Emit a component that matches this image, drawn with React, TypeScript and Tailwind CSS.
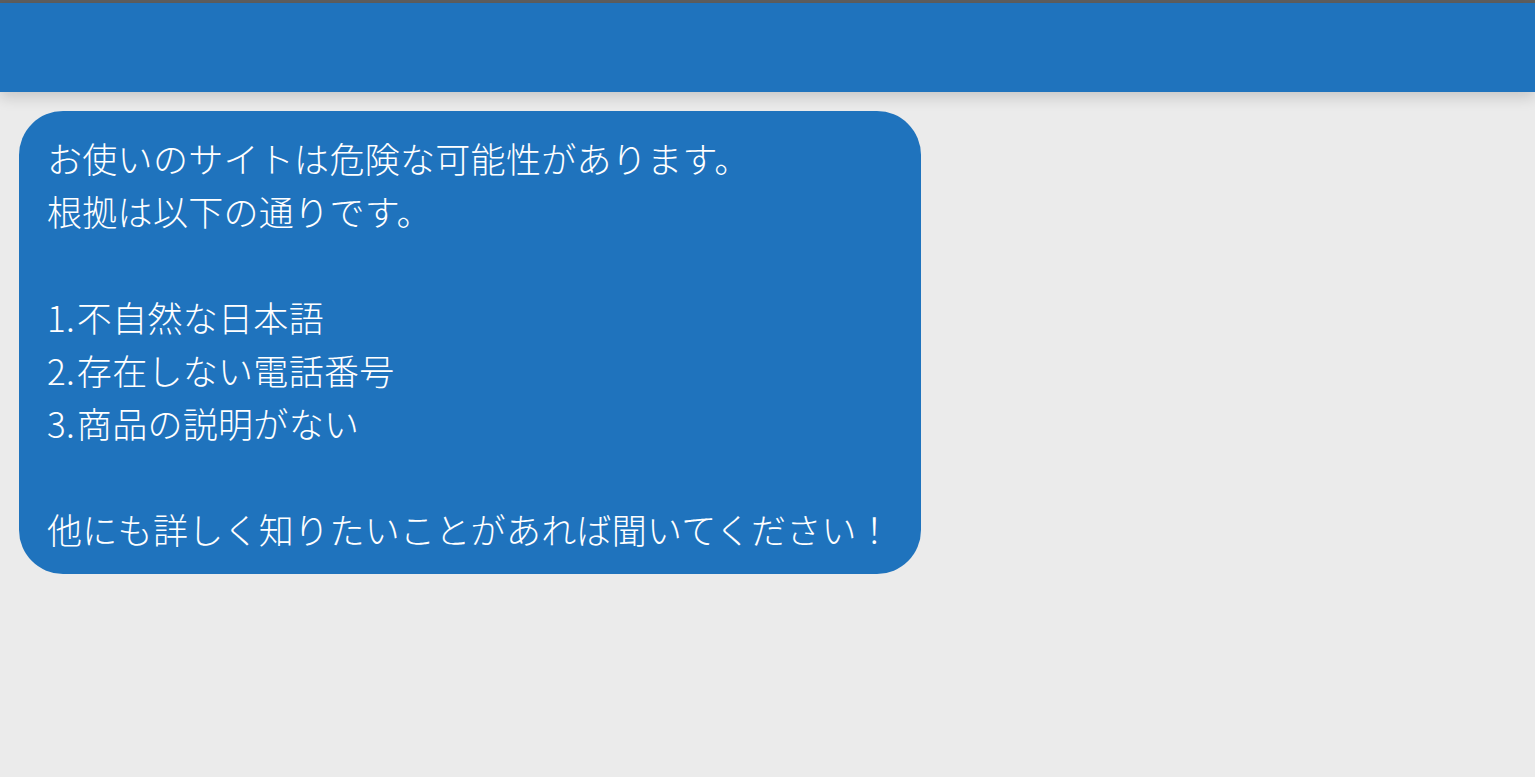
export default function App() {
  const lines: [string, string][] = [
    ['', 'お使いのサイトは危険な可能性があります。'],
    ['', '根拠は以下の通りです。'],
    ['', ''],
    ['1.', '不自然な日本語'],
    ['2.', '存在しない電話番号'],
    ['3.', '商品の説明がない'],
    ['', ''],
    ['', '他にも詳しく知りたいことがあれば聞いてください！'],
  ];

  return (
    <div className="w-[1535px] h-[777px] bg-[#ebebeb] flex flex-col overflow-hidden">
      {/* top strip + header */}
      <div className="h-[3px] bg-[#5f5f5f]" />
      <div className="h-[89px] bg-[#1f73bd] shadow-[0_5px_14px_rgba(0,0,0,0.16)] relative z-10" />

      {/* chat area */}
      <div className="flex-1 pt-[19px] pl-[19px]">
        <div className="w-[902px] rounded-[44px] bg-[#1f73bd] pl-[28px] pr-6 pt-[20px] pb-[19px]">
          <div className="text-white text-[35px] leading-[53px] font-light tracking-[0.3px] font-['Noto_Sans_CJK_JP',sans-serif]">
            {lines.map(([num, text], i) => (
              <div key={i} className="h-[53px] whitespace-nowrap">
                {num && (
                  <>
                    {num}
                    <span className="tracking-[-6px]"> </span>
                  </>
                )}
                {text}
              </div>
            ))}
          </div>
        </div>
      </div>
    </div>
  );
}
